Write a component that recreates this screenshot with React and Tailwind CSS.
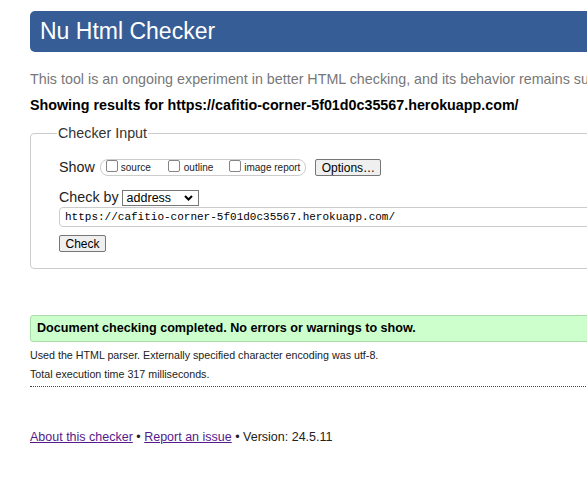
export default function App() {
  const box = "w-[12px] h-[12px] shrink-0 border border-[#858585] rounded-[2px] bg-white";
  return (
    <div className="w-[587px] h-[477px] overflow-hidden bg-white" style={{ fontFamily: '"Liberation Sans", Arial, sans-serif' }}>
      <div className="w-[640px] pl-[30px] pt-[11px]">
        <div className="h-[41px] rounded-[5px] bg-[#365d95] pl-[10px] flex items-center">
          <h1 className="text-white text-[23px] leading-none">Nu Html Checker</h1>
        </div>
        <p className="mt-[18px] text-[14.3px] leading-[18px] text-[#777] whitespace-nowrap">
          This tool is an ongoing experiment in better HTML checking, and its behavior remains subject to change
        </p>
        <p className="mt-[8px] text-[14.3px] leading-[18px] font-bold text-black whitespace-nowrap">
          Showing results for https://cafitio-corner-5f01d0c35567.herokuapp.com/
        </p>
        <fieldset className="mt-[10px] border border-[#ccc] rounded-[4px] pl-[28px] pb-[16px] pt-0">
          <legend className="px-[1px] text-[14.3px] leading-[18px] text-[#333] -ml-[2px]">Checker Input</legend>
          <div className="flex items-center h-[17px] mt-[17px] text-[14.3px] text-[#222]">
            <span className="leading-[17px]">Show</span>
            <div className="ml-[5px] h-[17px] flex items-start border border-[#ccc] rounded-[8px] pl-[5px] pr-[5px] text-[10px] leading-[12px] text-[#222]">
              <span className={box}></span>
              <span className="ml-[3px] mt-[2px]">source</span>
              <span className={box + " ml-[17px]"}></span>
              <span className="ml-[4px] mt-[2px]">outline</span>
              <span className={box + " ml-[16px]"}></span>
              <span className="ml-[3px] mt-[2px]">image report</span>
            </div>
            <button className="ml-[9px] h-[17px] w-[66px] border border-[#767676] bg-[#efefef] rounded-[2px] text-[12px] leading-none text-black">Options…</button>
          </div>
          <div className="mt-[14px] flex items-center h-[16px] text-[14.3px] text-[#222]">
            <span>Check by</span>
            <div className="ml-[3px] w-[77px] h-[16px] border border-[#767676] flex items-center justify-between pl-[4px] pr-[5px] text-[12.5px] text-black">
              <span className="leading-none">address</span>
              <svg width="9" height="6" viewBox="0 0 9 6"><path d="M1 1 L4.5 4.5 L8 1" stroke="#000" strokeWidth="2" fill="none" /></svg>
            </div>
          </div>
          <div className="mt-[1px] h-[20px] border border-[#ccc] rounded-[4px] flex items-center pl-[5px] text-[11px] text-black" style={{ fontFamily: '"Liberation Mono", monospace' }}>
            https://cafitio-corner-5f01d0c35567.herokuapp.com/
          </div>
          <button className="block mt-[8px] h-[17px] w-[47px] border border-[#767676] bg-[#efefef] rounded-[2px] text-[12px] leading-none text-black">Check</button>
        </fieldset>
        <div className="mt-[46px] h-[27px] border border-[#aaddaa] bg-[#ccffcc] rounded-[3px] flex items-center pl-[6px] text-[12.6px] font-bold text-black">
          Document checking completed. No errors or warnings to show.
        </div>
        <p className="mt-[6px] text-[10.7px] leading-[14px] text-[#222]">Used the HTML parser. Externally specified character encoding was utf-8.</p>
        <p className="mt-[5px] text-[10.7px] leading-[14px] text-[#222]">Total execution time 317 milliseconds.</p>
        <div className="mt-[5px] border-t border-dotted border-[#444]"></div>
        <p className="mt-[42px] text-[12.5px] leading-[16px] text-[#222]">
          <a className="underline text-[#551a8b]" href="#">About this checker</a> • <a className="underline text-[#551a8b]" href="#">Report an issue</a> • Version: 24.5.11
        </p>
      </div>
    </div>
  );
}
